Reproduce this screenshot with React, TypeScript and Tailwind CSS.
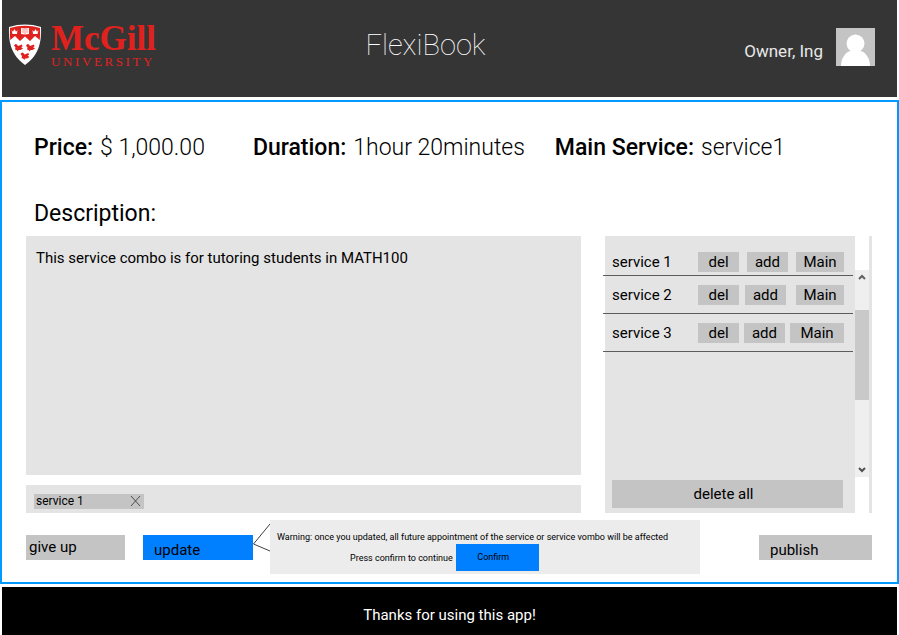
import React from "react";

type ServiceRow = {
  name: string;
  row: string;
  actions: string;
  main: string;
};

const services: ServiceRow[] = [
  { name: "service 1", row: "h-10 pt-3", actions: "gap-2", main: "w-12" },
  { name: "service 2", row: "h-[38px]", actions: "gap-[6px]", main: "ml-1 w-12" },
  { name: "service 3", row: "h-[38px]", actions: "gap-[5px]", main: "w-[54px]" },
];

const smallButton = "h-5 bg-[#c4c4c4] text-center leading-5";

function McGillLogo() {
  return (
    <div className="flex items-start gap-[9px] text-[#e0221f]">
      <svg width="34" height="42" viewBox="0 0 34 42" role="img" aria-label="McGill crest">
        <path
          d="M1 3Q9 .6 17 .6T33 3C33.600 18 31 31 17 41 3 31 .4 18 1 3Z"
          fill="#ffffff"
        />
        <path
          d="M2 4Q9 1.800 17 1.800T32 4Q32.400 11 31.700 16L27 12 22 17 17 12.500 12 17 7 12 2.300 16Q1.600 11 2 4Z"
          fill="#e0221f"
        />
        <path d="M13 4 17 4.600 21 4V10L17 10.600 13 10Z" fill="#ffffff" />
        <path d="M17 5v5M14 6h2M14 8h2M18 6h2M18 8h2" stroke="#e0221f" strokeWidth=".5" />
        <path
          d="M3.500 6 5 7.800 6.500 5 8 7.800 9.500 6 9 10H4.500ZM24.500 6 26 7.800 27.500 5 29 7.800 30.500 6 29.500 10H25Z"
          fill="#ffffff"
        />
        <g fill="#e0221f">
          <path d="M6 21.500 7.500 20 9 20.500 10 22 14 20.500 14.500 22.500 13 23 15 24.500 12.500 26 10.500 26 10 27.500 8.500 26 7 25.500 7.500 23.500Z" />
          <path d="M18 21.500 19.500 20 21 20.500 22 22 26 20.500 26.500 22.500 25 23 27 24.500 24.500 26 22.500 26 22 27.500 20.500 26 19 25.500 19.500 23.500Z" />
          <path d="M12.500 30 14 28.500 15.500 29 16.500 30.500 20.500 29 21 31 19.500 31.500 21.500 33 19 34.500 17 34.500 16.500 36 15 34.500 13.500 34 14 32Z" />
        </g>
      </svg>
      <div className="font-['Liberation_Serif',serif]">
        <div className="text-[35px] leading-[30px] font-bold">McGill</div>
        <div className="text-[13px] leading-4 tracking-[0.2em]">UNIVERSITY</div>
      </div>
    </div>
  );
}

function Header() {
  return (
    <header className="mx-[2px] mb-[3px] grid h-[97px] grid-cols-[1fr_auto_1fr] items-center bg-[#353535] pr-[22px] pb-1 pl-[6px] text-white">
      <McGillLogo />
      <h1 className="pr-8 pb-1 text-[29px] leading-9 font-thin">FlexiBook</h1>
      <div className="flex items-center justify-end gap-[13px]">
        <span className="pt-2 text-[17px] leading-6 text-[#e8e8e8]">Owner, Ing</span>
        <svg width="39" height="38" viewBox="0 0 39 38" role="img" aria-label="Profile picture">
          <rect width="39" height="38" fill="#c4c4c4" />
          <circle cx="19.500" cy="15.500" r="9" fill="#ffffff" />
          <path d="M5 38C5 29 11 23 15 23H24C28 23 34 29 34 38Z" fill="#ffffff" />
        </svg>
      </div>
    </header>
  );
}

function ServicePanel() {
  return (
    <section aria-label="Services" className="flex w-[267px] shrink-0 bg-[#e4e4e4] pr-[3px]">
      <div className="flex min-w-0 flex-1 flex-col">
        <ul className="-ml-[2px]">
          {services.map((s) => (
            <li
              key={s.name}
              className={`mr-[2px] flex items-center justify-between border-b border-[#5c5c5c] pr-[9px] pl-[9px] ${s.row}`}
            >
              <span className="pt-[2px]">{s.name}</span>
              <div className={`flex ${s.actions}`}>
                <button className={`${smallButton} w-[41px]`}>del</button>
                <button className={`${smallButton} w-[41px]`}>add</button>
                <button className={`${smallButton} ${s.main}`}>Main</button>
              </div>
            </li>
          ))}
        </ul>
        <button className="mt-auto mr-3 mb-[5px] ml-[7px] h-7 bg-[#c4c4c4] pr-2">delete all</button>
      </div>
      <div className="flex w-[14px] bg-white pt-[34px] pb-9">
        <div className="flex w-full flex-col items-center bg-[#efefef]">
          <svg width="14" height="40" viewBox="0 0 14 40" fill="none" stroke="#606060" strokeWidth="2">
            <path d="M4 9 7 6 10 9" />
          </svg>
          <div className="h-[90px] w-full bg-[#c9c9c9]" />
          <svg className="mt-auto" width="14" height="16" viewBox="0 0 14 16" fill="none" stroke="#505050" strokeWidth="2">
            <path d="M4 7 7 10 10 7" />
          </svg>
        </div>
      </div>
    </section>
  );
}

export default function App() {
  return (
    <div className="flex min-h-screen flex-col bg-white font-[Roboto,sans-serif] text-[15px] text-black">
      <Header />
      <main className="flex flex-1 flex-col border-2 border-[#0099ff] pr-[25px] pb-2 pl-6">
        <dl className="flex pt-[30px] pl-2 text-[23px] leading-8 font-light">
          <div className="mr-12 flex gap-[7px]">
            <dt className="font-medium">Price:</dt>
            <dd>$ 1,000.00</dd>
          </div>
          <div className="mr-[30px] flex gap-[7px]">
            <dt className="font-medium">Duration:</dt>
            <dd>1hour 20minutes</dd>
          </div>
          <div className="flex gap-[7px]">
            <dt className="font-medium">Main Service:</dt>
            <dd>service1</dd>
          </div>
        </dl>

        <label htmlFor="description" className="mt-[34px] pl-2 text-[23px] leading-8">
          Description:
        </label>

        <div className="mt-[6px] flex flex-1 gap-6">
          <div className="flex flex-1 flex-col gap-[10px]">
            <textarea
              id="description"
              className="w-full flex-1 resize-none bg-[#e4e4e4] px-[10px] py-3 leading-5 outline-none"
              defaultValue="This service combo is for tutoring students in MATH100"
            />
            <div className="flex h-7 items-center bg-[#e4e4e4] px-2 pt-1">
              <span className="flex h-[15px] w-[110px] items-center justify-between bg-[#c4c4c4] px-[2px] text-xs leading-4">
                service 1
                <button aria-label="Remove service 1">
                  <svg width="12" height="12" viewBox="0 0 12 12" stroke="#303030" strokeWidth=".8">
                    <path d="M1 1 10 11M10 1 1 11" />
                  </svg>
                </button>
              </span>
            </div>
          </div>
          <ServicePanel />
        </div>

        <div className="mt-[7px] flex items-center">
          <button className="mr-[18px] h-[25px] w-[99px] bg-[#c4c4c4] pl-[3px] text-left">give up</button>
          <button className="h-[25px] w-[110px] bg-[#007fff] pt-1 pl-[11px] text-left">update</button>
          <svg width="17" height="54" viewBox="0 0 17 54" fill="none" stroke="#404040" strokeWidth="1">
            <path d="M17 4 .5 24 17 31" />
          </svg>
          <div role="alert" className="h-[54px] w-[430px] bg-[#ececec] pl-[7px] text-[9px]">
            <p className="h-6 pt-[9px] leading-4">
              Warning: once you updated, all future appointment of the service or service vombo will be affected
            </p>
            <div className="flex items-center gap-[3px] pl-[73px]">
              <span className="pt-[2px]">Press confirm to continue</span>
              <button className="h-[27px] w-[83px] bg-[#007fff] pr-2">Confirm</button>
            </div>
          </div>
          <button className="ml-auto h-[25px] w-[113px] bg-[#c4c4c4] pt-1 pl-[11px] text-left">publish</button>
        </div>
      </main>
      <footer className="mx-[2px] mt-[3px] h-12 bg-black pt-[18px] text-center leading-5 text-white">
        <p>Thanks for using this app!</p>
      </footer>
    </div>
  );
}
